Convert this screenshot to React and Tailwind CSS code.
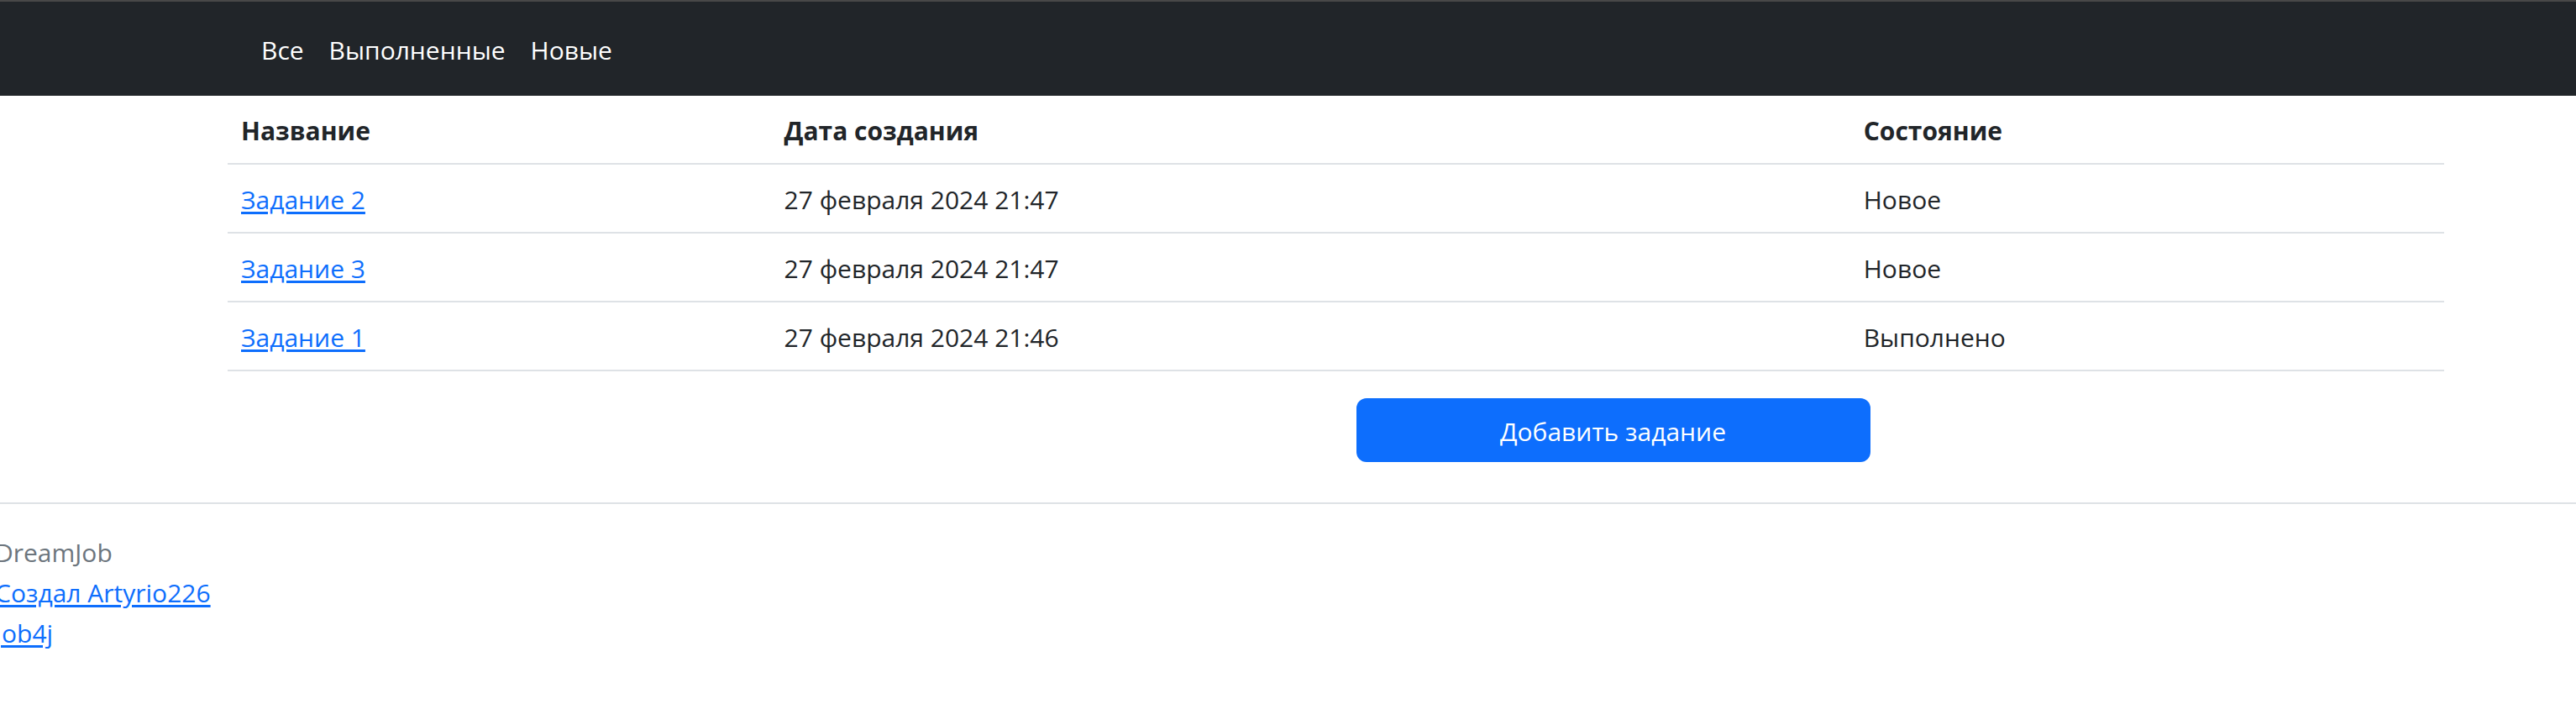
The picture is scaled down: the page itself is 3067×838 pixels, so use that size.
const nav = ['Все', 'Выполненные', 'Новые'];
const tasks = [
  ['Задание 2', '27 февраля 2024 21:47', 'Новое'],
  ['Задание 3', '27 февраля 2024 21:47', 'Новое'],
  ['Задание 1', '27 февраля 2024 21:46', 'Выполнено'],
];

const cell = 'px-4 pt-[18px] pb-[14px]';
const link = 'text-[#0d6efd] underline decoration-[3px] underline-offset-[3px]';

export default function App() {
  return (
    <div className="overflow-x-hidden bg-white font-['Open_Sans','Noto_Sans',sans-serif] text-[30px] leading-12 text-[#212529]">
      <header className="border-t-2 border-[#484848] bg-[#212529]">
        <nav className="flex h-28 items-center gap-[30px] px-[311px] pt-1 text-white">
          {nav.map((n) => (
            <a key={n} href="#">{n}</a>
          ))}
        </nav>
      </header>
      <main className="pr-[157px] pl-[271px]">
        <table className="w-full table-fixed border-collapse text-left">
          <colgroup>
            <col className="w-[24.5%]" />
            <col className="w-[48.7%]" />
            <col />
          </colgroup>
          <thead>
            <tr className="border-b-2 border-[#dee2e6]">
              <th className={`${cell} font-bold`}>Название</th>
              <th className={`${cell} font-bold`}>Дата создания</th>
              <th className={`${cell} font-bold`}>Состояние</th>
            </tr>
          </thead>
          <tbody>
            {tasks.map(([name, date, state]) => (
              <tr key={name} className="border-b-2 border-[#dee2e6]">
                <td className={cell}><a href="#" className={link}>{name}</a></td>
                <td className={cell}>{date}</td>
                <td className={cell}>{state}</td>
              </tr>
            ))}
          </tbody>
        </table>
        <div className="flex justify-center pt-8 pb-12 pl-[660px]">
          <button type="button" className="h-[76px] w-[612px] rounded-xl bg-[#0d6efd] pt-1 text-white">Добавить задание</button>
        </div>
      </main>
      <footer className="-ml-1.5 border-t-2 border-[#dee2e6] pt-[34px]">
        <p className="text-[#6c757d]">DreamJob</p>
        <p><a href="#" className={link}>Создал Artyrio226</a></p>
        <p><a href="#" className={link}>Job4j</a></p>
      </footer>
    </div>
  );
}
